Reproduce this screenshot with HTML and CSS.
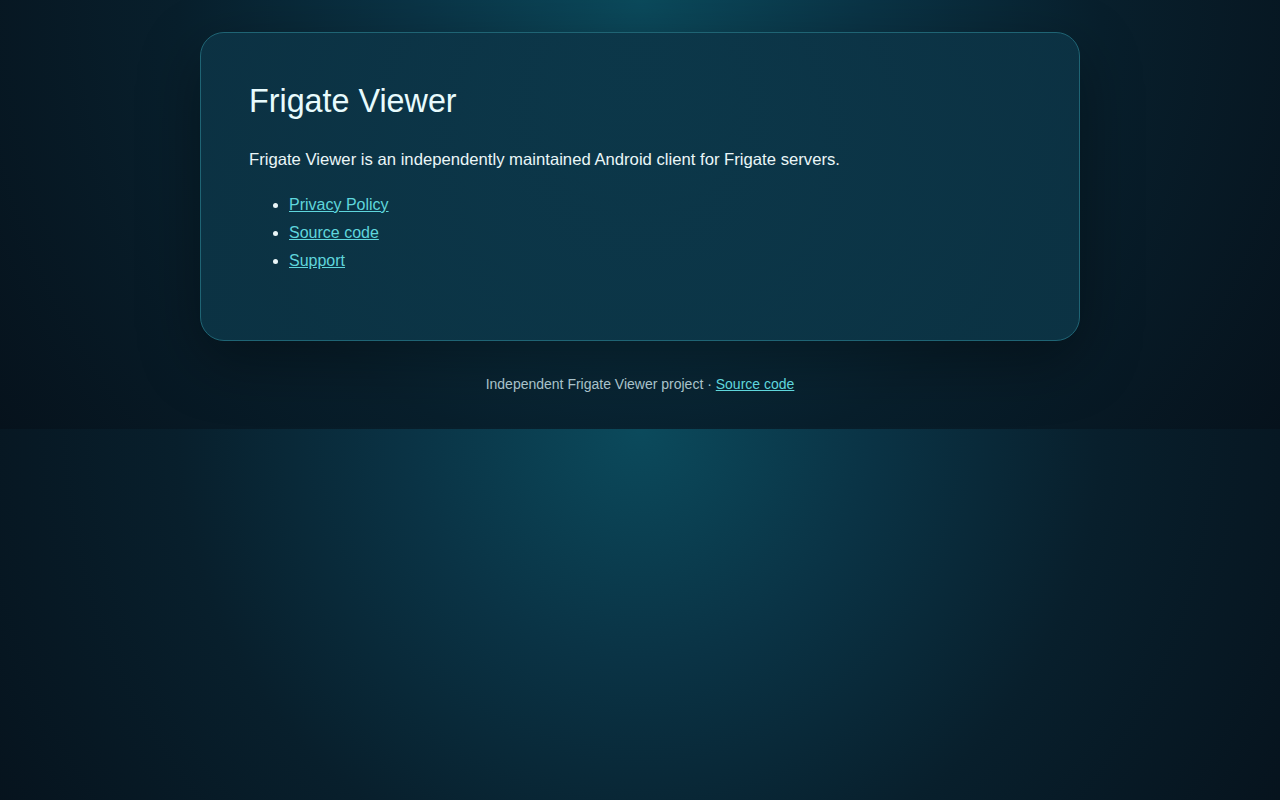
FILE: index.html
```html
<!DOCTYPE html>
<html lang="en">
<head>
<meta charset="utf-8">
<title>Frigate Viewer</title>
<link rel="stylesheet" href="styles.css">
</head>
<body>
<main class="card">
  <h1 class="title">Frigate Viewer</h1>
  <p class="lead">Frigate Viewer is an independently maintained Android client for Frigate servers.</p>
  <ul class="links">
    <li><a href="#">Privacy Policy</a></li>
    <li><a href="#">Source code</a></li>
    <li><a href="#">Support</a></li>
  </ul>
</main>
<footer class="footer">Independent Frigate Viewer project · <a href="#">Source code</a></footer>
</body>
</html>
```
FILE: styles.css
```css
body {
  margin: 0;
  padding: 32px 0 33px;
  font-family: "Liberation Sans", Arial, sans-serif;
  color: #eaf6f8;
  background: radial-gradient(circle farthest-corner at 50% 0%, #0b4a5c 0%, #0a3345 30%, #081f2c 60%, #06121c 100%);
}

a {
  color: #5fd6dc;
}

.card {
  width: 782px;
  margin: 0 auto;
  padding: 49px 48px 47px;
  border: 1px solid #1f6474;
  border-radius: 24px;
  background: linear-gradient(180deg, rgba(12, 52, 70, 0.85), rgba(12, 56, 74, 0.8));
  box-shadow: 0 20px 60px rgba(0, 0, 0, 0.35);
}

.title {
  margin: 0 0 27px;
  font-size: 32.3px;
  font-weight: 400;
  line-height: 38px;
  color: #e8fbfd;
}

.lead {
  margin: 0 0 18px;
  font-size: 16.68px;
  line-height: 26px;
}

.links {
  margin: 0 0 18px;
  padding-left: 40px;
  font-size: 16px;
}

.links li {
  line-height: 28px;
}

.footer {
  margin-top: 31px;
  text-align: center;
  font-size: 14px;
  line-height: 24px;
  color: #a9c2ca;
}
```
